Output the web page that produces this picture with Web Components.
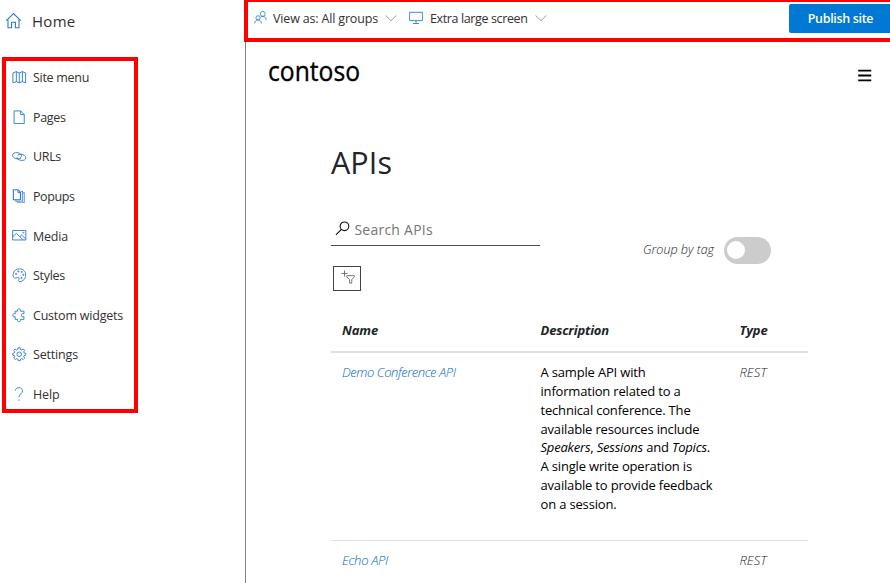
<!DOCTYPE html>
<html lang="en"><head><meta charset="utf-8"><title>Developer portal</title>
<style>html,body{margin:0;width:890px;height:583px;overflow:hidden;background:#fff}body{font-family:"Open Sans","Noto Sans",sans-serif}</style></head>
<body><portal-editor></portal-editor>
<script>
// Text run fitted to a given width, by tracking or by horizontal scale.
customElements.define('fit-text', class extends HTMLElement {
  constructor(){super();this.attachShadow({mode:'open'}).innerHTML='<style>:host{display:inline-block;white-space:nowrap;flex:none;text-align:left}span{display:inline-block;transform-origin:0 50%}</style><span><slot></slot></span>';}
  connectedCallback(){
    const w=+this.getAttribute('w'), s=this.shadowRoot.querySelector('span');
    if(!w) return;
    const n=s.getBoundingClientRect().width;
    if(this.hasAttribute('scale')) s.style.transform='scaleX('+w/n+')';
    else s.style.letterSpacing=(w-n)/this.textContent.length+'px';
    this.style.width=w+'px';
  }
});
const ICONS={
 home:'<path d="M1.2 8.2 8 1.5l6.8 6.7M2.8 7v7.9h3.4V9.6h3.6v5.3h3.4V7"/>',
 map:'<path d="M1 3.2 4.8 1.8v11L1 14.2zM4.8 1.8l3.2 1.4v11l-3.2-1.4M8 3.2l3.5-1.4v11L8 14.2M11.5 1.8 15 3.2v11l-3.5-1.4"/>',
 page:'<path d="M2.3 1h7.2l4 4v10H2.3zM9.5 1v4h4"/>',
 link:'<path d="M9.800 10.300C8.700 11 7.300 11.100 5.800 10.900 2.800 10.500.6 8.900.7 6.800.8 4.900 2.800 3.800 5.600 4c2.900.2 5 1.700 5 3.500 0 1-.7 1.800-1.800 2.300"/><path d="M6.200 6.900c1-.8 2.500-1.200 4.100-1 2.900.3 5.100 1.900 5 3.900-.1 1.900-2.300 3.100-4.900 2.800-2.900-.3-4.900-1.800-4.900-3.700"/>',
 popup:'<path d="M1.500.800h5l2.800 3v8h-7.800z" stroke-width="1.200"/><path d="M6.500 1v3h3"/><path d="M9.500 2.500h2v11H4.300v-1.700M11.500 4.300h2v11H6.500v-1.800" stroke-width="1.200" opacity=".75"/>',
 media:'<path d="M.7 2.800h14.600v10.400H.7zM1 9.500l3.800-3.700 7.300 7.200M8.800 9.500l1.900-1.700 4.300 4"/><circle cx="12.500" cy="5.200" r=".5"/>',
 palette:'<path d="M1.200 7C1.600 3.200 4.800.8 8.500.9c4 0 6.700 3.200 6.600 7-.1 4-3 7-6.300 7-1.900 0-2-1.200-1.300-2.300.8-1.500.3-2.500-1-2.200l-2.200.8C2.200 11.600.9 9.300 1.200 7z"/><circle cx="4.500" cy="6.500" r=".7"/><circle cx="7" cy="3.800" r=".7"/><circle cx="10.700" cy="4.300" r=".7"/><circle cx="12.500" cy="7.500" r=".7"/><circle cx="10.500" cy="11" r=".7"/>',
 widget:'<path d="M3.500 3.500h2.700C5.600 1.500 6.500.9 7.800.9S10 1.700 9.400 3.500h3.800v3c-2-.8-2.900.2-2.900 1.500s.9 2.200 2.900 1.500v3H9.400c.6 1.800-.3 2.600-1.600 2.600s-2.200-.8-1.600-2.600H3.500V9.600C1.700 10.200.9 9.300.9 8s.8-2.200 2.600-1.600z"/>',
 gear:'<path d="m6.700.9-.4 1.900-1.200.5-1.700-1.100-1.500 1.500L3 5.300l-.5 1.300-1.700.4v2l1.800.4.5 1.200L2 12.300l1.600 1.500 1.700-1 1.200.5.4 1.800h2.200l.4-1.800 1.200-.5 1.700 1 1.500-1.500-1-1.700.5-1.200 1.800-.4V7l-1.800-.4-.5-1.300 1-1.600-1.500-1.500-1.700 1.100-1.200-.5L9 .9z"/><circle cx="8" cy="8" r="2.500"/>',
 help:'<path d="M3.700 4C4 1.800 5.700.8 7.700.8c2.300 0 3.900 1.400 3.900 3.500 0 3.100-4 3.500-4 7M7.600 13.700v1.500"/>',
 people:'<circle cx="10.800" cy="3.600" r="3"/><path d="M8.200 7.300c.8-.5 1.600-.7 2.600-.7 2.300 0 4.100 1.600 4.400 4.200"/><circle cx="5" cy="8.400" r="2.600"/><path d="M.8 15.200c.2-2.500 1.900-4.200 4.200-4.200s4 1.700 4.200 4.200"/>',
 screen:'<path d="M.7 1.500h14.600v9.500H.7zM8 11v3.300M4.500 14.300h7"/>',
 chevron:'<path d="m.8 4.600 7.200 7 7.200-7"/>',
 search:'<circle cx="10.100" cy="5.600" r="4.600"/><path d="M6.800 9 1 14.800"/>',
 filter:'<path d="M.5 4h7M4 .5v7M6.500 6.500h9v1L12.300 11v4h-2.500v-4L6.500 7.500z"/>',
 bars:'<path d="M1.300 2.800h13.900M1.300 8h13.900M1.300 13.200h13.900" stroke-width="2.100"/>'
};
customElements.define('ui-icon', class extends HTMLElement {
  constructor(){super();this.attachShadow({mode:'open'});}
  connectedCallback(){this.shadowRoot.innerHTML='<style>:host{display:block;flex:none;width:var(--s,15px);height:var(--s,15px);color:#2b78d0}svg{display:block;width:100%;height:100%}</style><svg viewBox="0 0 16 16" fill="none" stroke="currentColor" stroke-width="'+(this.getAttribute('weight')||1)+'">'+ICONS[this.getAttribute('name')]+'</svg>';}
});
customElements.define('side-nav', class extends HTMLElement {
  constructor(){super();
   const items=[['map','Site menu',56],['page','Pages',32.500],['link','URLs',28],['popup','Popups',41.500],['media','Media',35],['palette','Styles',32],['widget','Custom widgets',90],['gear','Settings',45],['help','Help',26.500]];
   this.attachShadow({mode:'open'}).innerHTML=`<style>
   :host{display:block;border-right:1px solid #828282;color:#323130}
   .home{display:flex;align-items:center;height:43px;padding-left:5px;gap:10px;font-size:15px}
   .home ui-icon{--s:17px;margin-top:-2px}.home fit-text{margin-top:-2px}
   nav{margin:14px 0 0 2px;width:136px;height:356px;box-sizing:border-box;box-shadow:inset 0 0 0 4px #f00;display:grid;grid-template-rows:repeat(9,39.600px);font-size:12.500px}
   a{display:flex;align-items:center;gap:6.500px;padding-left:10px}
   a ui-icon{margin-top:1px;--s:14.500px}
   a fit-text{padding-top:1.800px}</style>
   <div class="home"><ui-icon name="home"></ui-icon><fit-text w="43.500">Home</fit-text></div>
   <nav>${items.map(i=>`<a><ui-icon name="${i[0]}"></ui-icon><fit-text w="${i[2]}">${i[1]}</fit-text></a>`).join('')}</nav>`;}
});
customElements.define('top-bar', class extends HTMLElement {
  constructor(){super();this.attachShadow({mode:'open'}).innerHTML=`<style>
   :host{display:flex;align-items:flex-start;box-sizing:border-box;height:42px;margin-left:-2px;border:solid #f00;border-width:2px 0 4px 4px;background:#fff;color:#323130;font-size:12.500px;position:relative}
   .g{display:flex;align-items:center;height:33px}.p{padding-left:6px;width:156px;box-sizing:border-box}
   .p ui-icon{--s:13px}.p ui-icon:first-child{margin-top:-3px}.p fit-text{margin-left:6px}
   .g .c{--s:12px;color:#777;margin-left:7px;margin-top:-1px}
   .s ui-icon:first-child{--s:14px;margin:-2px 7px 0 5px}
   button{margin:2px 0 0 auto;width:101px;height:29px;border:0;border-radius:2px 0 0 2px;background:#0078d4;color:#fff;font:600 12.500px "Open Sans",sans-serif;padding:0 0 0 2px}
   </style><div class="g p"><ui-icon name="people"></ui-icon><fit-text w="105">View as: All groups</fit-text><ui-icon class="c" name="chevron"></ui-icon></div>
   <div class="g s"><ui-icon name="screen"></ui-icon><fit-text w="97.500">Extra large screen</fit-text><ui-icon class="c" name="chevron"></ui-icon></div>
   <button><fit-text w="65.500">Publish site</fit-text></button>`;}
});
customElements.define('toggle-switch', class extends HTMLElement {
  constructor(){super();this.attachShadow({mode:'open'}).innerHTML='<style>:host{display:flex;align-items:center;box-sizing:border-box;width:47px;height:27px;border-radius:14px;background:#ccc;padding:0 0 1px 3px}i{width:18px;height:18px;border-radius:50%;background:#fff}</style><i></i>';}
});
customElements.define('api-table', class extends HTMLElement {
  constructor(){super();
   const d=[['A sample API with',105],['information related to a',140],['technical conference. The',150],['available resources include',159],['<i>Speakers</i>, <i>Sessions</i> and <i>Topics</i>.',169.500],['A single write operation is',151.500],['available to provide feedback',172],['on a session.',76]];
   this.attachShadow({mode:'open'}).innerHTML=`<style>
   :host{display:block;width:477px;font-size:13px;color:#212529}
   .r{display:grid;grid-template-columns:198.500px 199px 1fr;padding-left:11px;line-height:18.860px}
   .h{height:41px;border-bottom:2px solid #dee2e6;font-weight:700;font-style:italic;align-items:center;box-sizing:border-box;padding-bottom:2px}
   .one{height:188px;box-sizing:border-box;border-bottom:1px solid #dee2e6;padding-top:10px}.two{padding-top:10px}
   .it{font-style:italic;font-weight:300}.link{color:#0068c4}
   .desc{color:#000}.desc fit-text{display:block;height:18.860px}</style>
   <div class="r h"><fit-text w="36">Name</fit-text><fit-text w="68.500">Description</fit-text><fit-text w="28">Type</fit-text></div>
   <div class="r one"><div class="it link"><fit-text w="113.500">Demo Conference API</fit-text></div><div class="desc">${d.map(x=>`<fit-text w="${x[1]}">${x[0]}</fit-text>`).join('')}</div><div class="it"><fit-text w="27">REST</fit-text></div></div>
   <div class="r two"><div class="it link"><fit-text w="46">Echo API</fit-text></div><div></div><div class="it"><fit-text w="27">REST</fit-text></div></div>`;}
});
customElements.define('portal-page', class extends HTMLElement {
  constructor(){super();this.attachShadow({mode:'open'}).innerHTML=`<style>
   :host{display:block;color:#212529}
   header{display:flex;justify-content:space-between;align-items:center;height:66px;padding:0 18px 0 22px}
   .logo{font:500 27px/40px "Open Sans",sans-serif;color:#000;-webkit-text-stroke:.35px #000;margin-top:-9px}
   header ui-icon{--s:15px;color:#000}
   main{padding-left:85px;width:477px}
   h1{margin:33px 0 0;font-size:30.500px;font-weight:400;line-height:42px;height:42px}
   .tools{display:flex;height:56px;margin-top:29px}
   .search{width:209px;height:34px;box-sizing:border-box;border-bottom:1px solid #4c4c4c;display:flex;align-items:center;gap:4px;padding-left:4.400px;font-size:14px;color:#757575}
   .search ui-icon{--s:15px;color:#111;margin-top:-1px}.search fit-text{padding-top:2px}
   .group{display:flex;align-items:center;gap:10px;height:27px;margin:25px 0 0 103px;font:italic 300 12.500px "Open Sans",sans-serif}
   .group fit-text{margin-top:-2px}
   .filter{width:28px;height:25px;box-sizing:border-box;border:1px solid #444;margin:-2px 0 0 2px;padding:0 0 4px 1px;display:flex;align-items:center;justify-content:center}
   .filter ui-icon{--s:14px;color:#666}
   api-table{margin-top:21px}</style>
   <header><fit-text class="logo" w="92" scale>contoso</fit-text><ui-icon name="bars"></ui-icon></header>
   <main><h1><fit-text w="61">APIs</fit-text></h1>
   <div class="tools"><div class="search"><ui-icon name="search" weight="1.2"></ui-icon><fit-text w="78.500">Search APIs</fit-text></div><div class="group"><fit-text w="71">Group by tag</fit-text><toggle-switch></toggle-switch></div></div>
   <div class="filter"><ui-icon name="filter"></ui-icon></div>
   <api-table></api-table></main>`;}
});
customElements.define('portal-editor', class extends HTMLElement {
  constructor(){super();this.attachShadow({mode:'open'}).innerHTML='<style>:host{display:grid;grid-template-columns:246px 644px;height:583px;overflow:hidden}section{min-width:0}</style><side-nav></side-nav><section><top-bar></top-bar><portal-page></portal-page></section>';}
});
</script></body></html>
